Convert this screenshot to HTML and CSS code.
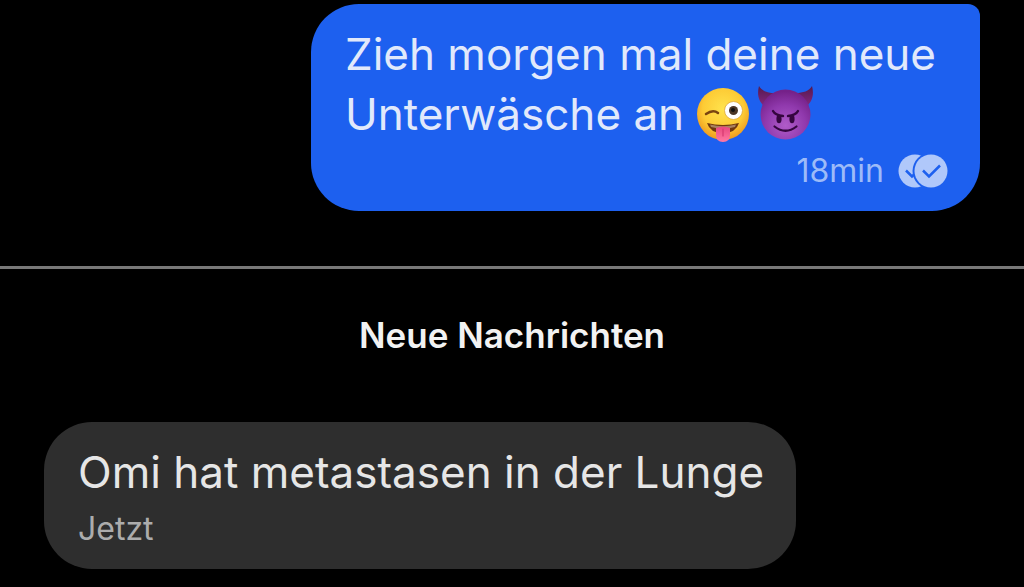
FILE: index.html
```html
<!DOCTYPE html>
<html lang="de">
<head>
	<title>Chat</title>
	<meta charset="utf-8">
	<meta name="viewport" content="width=device-width, initial-scale=1">

	<link rel="stylesheet" href="styles.css">
</head>

<body>

	<main class="chat">

		<div class="message outgoing">
			<p class="text">Zieh morgen mal deine neue Unterwäsche an
				<span class="emojis"><svg class="emoji" viewBox="3 0 56 60" role="img" aria-label="Zwinkerndes Gesicht mit Zunge">
					<defs>
						<radialGradient id="face" cx="50%" cy="40%" r="60%">
							<stop offset="0" stop-color="#ffe34d"/>
							<stop offset="0.65" stop-color="#fdcb35"/>
							<stop offset="1" stop-color="#ee9a1e"/>
						</radialGradient>
						<linearGradient id="tongue" x1="0" y1="0" x2="0" y2="1">
							<stop offset="0" stop-color="#e9487e"/>
							<stop offset="1" stop-color="#ff78a4"/>
						</linearGradient>
					</defs>
					<circle cx="30" cy="30" r="26" fill="url(#face)"/>
					<path d="M13 30Q20 25 25 29" fill="none" stroke="#7a4410" stroke-width="2.5" stroke-linecap="round"/>
					<circle cx="40.5" cy="26.5" r="9" fill="#fff" stroke="#e0a83a" stroke-width="0.8"/>
					<circle cx="40.5" cy="26.5" r="4.5" fill="#4a3526"/>
					<circle cx="40" cy="26" r="2" fill="#111"/>
					<path d="M14 39Q30 43 46 39Q43 49 30 49Q17 49 14 39Z" fill="#70380f"/>
					<path d="M17 40.5Q30 44 43 40.5L42 43Q30 46 18 43Z" fill="#fff3dc" opacity="0.4"/>
					<path d="M23 44Q30 41 37 44V51Q37 58 30 58Q23 58 23 51Z" fill="url(#tongue)"/>
					<path d="M30 45V52" stroke="#d53a70" stroke-width="1.2" stroke-linecap="round"/>
				</svg><svg class="emoji" viewBox="1 0 56 60" role="img" aria-label="Grinsendes Gesicht mit Hörnern">
					<defs>
						<radialGradient id="devil" cx="50%" cy="72%" r="68%">
							<stop offset="0" stop-color="#b05cc9"/>
							<stop offset="0.6" stop-color="#9039ad"/>
							<stop offset="1" stop-color="#752189"/>
						</radialGradient>
						<linearGradient id="horn" x1="0" y1="0" x2="0" y2="1">
							<stop offset="0" stop-color="#54194f"/>
							<stop offset="1" stop-color="#83277f"/>
						</linearGradient>
					</defs>
					<path d="M3 2C1 9 2 17 8 22L19 9C12 9 6 7 3 2Z" fill="url(#horn)"/>
					<path d="M56 2C58 9 57 17 51 22L40 9C47 9 53 7 56 2Z" fill="url(#horn)"/>
					<circle cx="29.5" cy="30.5" r="25" fill="url(#devil)"/>
					<path d="M17 27Q19 31 27 32" fill="none" stroke="#35063f" stroke-width="2.4" stroke-linecap="round"/>
					<path d="M42 27Q40 31 32 32" fill="none" stroke="#35063f" stroke-width="2.4" stroke-linecap="round"/>
					<ellipse cx="23" cy="35" rx="2.6" ry="4.2" fill="#35063f"/>
					<ellipse cx="36" cy="35" rx="2.6" ry="4.2" fill="#35063f"/>
					<path d="M18.5 42.5Q29.5 51 40.5 42.5" fill="none" stroke="#35063f" stroke-width="2.2" stroke-linecap="round"/>
				</svg></span>
			</p>
			<div class="meta">
				<span>18min</span>
				<svg class="status" viewBox="0 0 50 34" role="img" aria-label="Gelesen">
					<mask id="behind">
						<rect width="50" height="34" fill="#fff"/>
						<circle cx="33" cy="17" r="18.5" fill="#000"/>
						<path d="M8 16.500L14 22.500L26 11" fill="none" stroke="#000" stroke-width="2.5"/>
					</mask>
					<circle cx="17" cy="17" r="16.5" fill="currentColor" mask="url(#behind)"/>
					<circle cx="33" cy="17" r="16.5" fill="currentColor"/>
					<path class="check" d="M25 16.5L31 22.5L42 11.5"/>
				</svg>
			</div>
		</div>

		<h2 class="divider">Neue Nachrichten</h2>

		<div class="message incoming">
			<p class="text">Omi hat metastasen in der Lunge</p>
			<div class="meta">Jetzt</div>
		</div>

	</main>

</body>
</html>
```
FILE: styles.css
```css
* {
	margin: 0;
	padding: 0;
	box-sizing: border-box;
}

body {
	background-color: black;
	font-family: Inter, "Liberation Sans", sans-serif;
}

.chat {
	display: flex;
	flex-direction: column;
	padding: 4px 0px 18px 0px;
}

.message {
	display: flex;
	flex-direction: column;
	gap: 7px;
	margin: 0px 44px;
	padding: 20px 32px 20px 34px;
	border-radius: 48px;
}

	.text {
		font-size: 44px;
		line-height: 60px;
	}

	.meta {
		font-size: 32px;
		line-height: 40px;
	}

.outgoing {
	align-self: flex-end;
	max-width: 669px;
	border-top-right-radius: 12px;
	background-color: #1d60ef;
	color: #e1e9fb;
}

	.outgoing .meta {
		display: flex;
		align-items: center;
		justify-content: flex-end;
		gap: 14px;
		color: #9dbbf8;
	}

	.emojis {
		display: inline-flex;
		gap: 5px;
		height: 60px;
		vertical-align: top;
	}

		.emoji {
			width: 56px;
			height: 60px;
		}

	.status {
		width: 50px;
		height: 34px;
		color: #b0c8fa;
	}

		.check {
			fill: none;
			stroke: #1d60ef;
			stroke-width: 2.5;
		}

.incoming {
	align-self: flex-start;
	background-color: #2e2e2e;
	color: #e6e6e6;
}

	.incoming .meta {
		color: #acacac;
	}

.divider {
	margin-top: 55px;
	padding: 46px 0px 67px 0px;
	border-top: 3px solid #787878;
	color: #f2f2f2;
	font-size: 35px;
	font-weight: 600;
	line-height: 40px;
	text-align: center;
}
```
